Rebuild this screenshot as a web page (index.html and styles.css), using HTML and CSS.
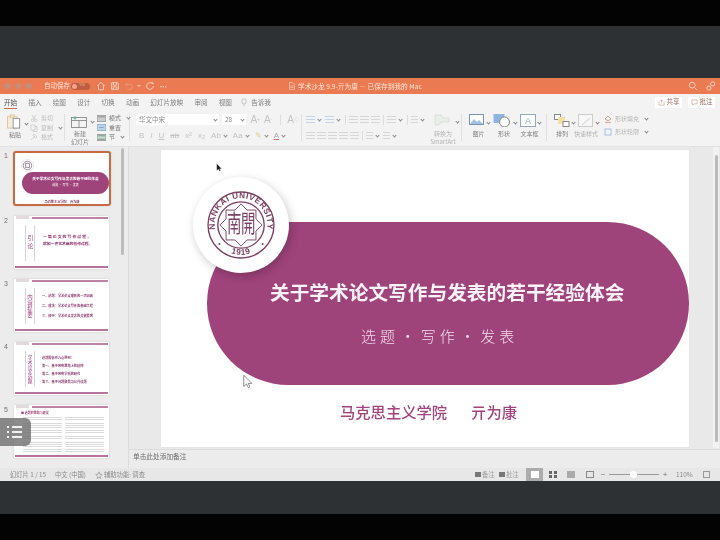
FILE: index.html
```html
<!DOCTYPE html>
<html lang="zh-CN">
<head>
<meta charset="utf-8">
<title>学术沙龙 9.9-亓为康</title>
<link rel="stylesheet" href="styles.css">
</head>
<body>
<div class="screen">
  <div class="band-black"></div>
  <div class="band-dark tall"></div>
  <header class="titlebar">
    <div class="lights"><i></i><i></i><i></i></div>
    <span class="autosave">自动保存</span>
    <span class="toggle"><b></b><em>关闭</em></span>
    <svg class="tb-icon" viewBox="0 0 12 12"><path d="M1.500 6 6 1.500 10.500 6M3 5v5.500h6V5"/></svg>
    <svg class="tb-icon" viewBox="0 0 12 12"><path d="M2 2h7l1 1v7H2zM4 2v3h4V2M4 10V7h4v3"/></svg>
    <svg class="tb-icon dim" viewBox="0 0 12 12"><path d="M2 4h5a3 3 0 0 1 0 6H4M2 4l2-2M2 4l2 2"/></svg>
    <span class="tb-caret"></span>
    <svg class="tb-icon" viewBox="0 0 12 12"><path d="M10 6a4 4 0 1 1-1.500-3.100M8.500 1v2h2"/></svg>
    <span class="tb-more">···</span>
    <div class="doc-title">
      <svg class="doc-icon" viewBox="0 0 8 10"><path d="M.5.500h4.500l2.500 2.500v6.500h-7zM2 5h4M2 7h4"/></svg>
      <span>学术沙龙 9.9-亓为康 — 已保存到我的 Mac</span>
    </div>
    <svg class="tb-icon right" viewBox="0 0 12 12"><circle cx="5" cy="5" r="3.500"/><path d="m8 8 3 3"/></svg>
    <svg class="tb-icon" viewBox="0 0 12 12"><circle cx="8" cy="3.500" r="2.500"/><circle cx="3.500" cy="8.500" r="2.500"/></svg>
  </header>

  <nav class="tabs">
    <span class="tab active">开始</span>
    <span class="tab">插入</span>
    <span class="tab">绘图</span>
    <span class="tab">设计</span>
    <span class="tab">切换</span>
    <span class="tab">动画</span>
    <span class="tab">幻灯片放映</span>
    <span class="tab">审阅</span>
    <span class="tab">视图</span>
    <span class="tab tell">
      <svg class="bulb" viewBox="0 0 8 10"><path d="M2.500 7.500C2 6 1 5.500 1 3.800a3 3 0 0 1 6 0C7 5.500 6 6 5.500 7.500zM3 9.300h2"/></svg>
      告诉我
    </span>
    <div class="tab-actions">
      <span class="pill-btn">
        <svg viewBox="0 0 8 8"><path d="M1 3v4h6V3M4 5V1M2.500 2.500 4 1l1.500 1.500"/></svg>共享
      </span>
      <span class="pill-btn">
        <svg viewBox="0 0 8 8"><path d="M1 1h6v4.500H3.500L2 7V5.500H1z"/></svg>批注
      </span>
    </div>
  </nav>

  <section class="ribbon">
    <div class="group paste-group">
      <div class="big-tool">
        <svg class="i-paste" viewBox="0 0 18 16"><path class="o" d="M1 2.500h10V15H1z"/><rect class="o" x="4" y="1" width="4" height="2.500"/><rect class="w" x="7" y="5" width="7" height="10"/></svg>
        <span class="lbl">粘贴</span>
      </div>
      <span class="caret paste-caret"></span>
      <div class="mini-col">
        <span class="mini"><svg class="mi" viewBox="0 0 8 8"><path d="M2 1l3 4M6 1 3 5"/><circle cx="2.500" cy="6.300" r="1.200"/><circle cx="5.500" cy="6.300" r="1.200"/></svg><span>剪切</span></span>
        <span class="mini"><svg class="mi" viewBox="0 0 8 8"><path d="M1 1h4v5H1zM3 6v1.500h4v-5H5"/></svg><span>复制</span><i class="caret"></i></span>
        <span class="mini"><svg class="mi" viewBox="0 0 8 8"><path d="M1 7 5 3M4 1l3 3-1.500 1L3 2.500z"/></svg><span>格式</span></span>
      </div>
    </div>
    <div class="group slide-group">
      <div class="big-tool new-slide">
        <svg class="i-new" viewBox="0 0 16 12"><rect x=".5" y="1.500" width="15" height="10"/><path d="M.5 4.500h15M8 4.500v7"/><path class="g" d="M4 0v4M2 2h4"/></svg>
        <span class="lbl two">新建<br>幻灯片</span>
      </div>
      <span class="caret new-caret"></span>
      <div class="mini-col wide">
        <span class="mini"><svg class="sq" viewBox="0 0 8 6"><rect width="8" height="6"/><path d="M1 1.500h6"/></svg><span>模式</span><i class="caret"></i></span>
        <span class="mini"><svg class="sq blue" viewBox="0 0 8 6"><rect width="8" height="6"/><path d="M2 3h4"/></svg><span>重置</span></span>
        <span class="mini"><svg class="sq green" viewBox="0 0 8 6"><rect width="8" height="6"/><path d="M1 1.500h6M1 4.500h6"/></svg><span>节</span><i class="caret"></i></span>
      </div>
    </div>
    <div class="group font-group">
      <div class="font-row">
        <span class="select font-name">华文中宋<i class="caret"></i></span>
        <span class="select font-size">28<i class="caret"></i></span>
        <span class="glyph lg">A<sup>+</sup></span>
        <span class="glyph lg">A<sup>-</sup></span>
        <span class="vsep"></span>
        <span class="glyph lg">A<sub>◇</sub></span>
      </div>
      <div class="font-row fmt">
        <span class="glyph">B</span>
        <span class="glyph it">I</span>
        <span class="glyph un">U</span>
        <span class="glyph st">ab</span>
        <span class="glyph">x²</span>
        <span class="glyph">x₂</span>
        <span class="glyph">Ab<i class="caret"></i></span>
        <span class="glyph">Aa<i class="caret"></i></span>
        <span class="glyph hl">✎<i class="caret"></i></span>
        <span class="glyph red"><u>A</u><i class="caret"></i></span>
      </div>
    </div>
    <div class="group para-group">
      <div class="para-rows">
        <div class="para-row">
          <span class="lines bul"></span><i class="caret"></i>
          <span class="lines bul"></span><i class="caret"></i>
          <span class="vsep"></span>
          <span class="lines"></span><span class="lines"></span><span class="lines"></span>
          <span class="vsep"></span>
          <span class="lines"></span><i class="caret"></i>
          <span class="vsep"></span>
          <span class="lines short"></span><i class="caret"></i>
        </div>
        <div class="para-row">
          <span class="lines"></span><span class="lines"></span><span class="lines"></span><span class="lines"></span><span class="lines"></span>
          <span class="vsep"></span>
          <span class="lines short"></span><i class="caret"></i>
          <span class="lines short"></span><i class="caret"></i>
        </div>
      </div>
      <div class="big-tool art-tool">
        <svg class="i-art" viewBox="0 0 18 12"><path d="M1 1h6l2 3 6 0v4H7L5 11H1z"/></svg>
        <span class="lbl two dim">转换为<br>SmartArt</span>
      </div>
      <i class="caret art-caret"></i>
    </div>
    <div class="group insert-group">
      <div class="big-tool">
        <svg class="i-ins" viewBox="0 0 16 13"><rect x=".5" y=".5" width="14" height="10" fill="#fff" stroke="#7d93ad"/><path d="M1 10l4-5 3 3 2-2 4 4z" fill="#9cc2e4"/></svg>
        <span class="lbl">图片</span>
      </div><i class="caret"></i>
      <div class="big-tool">
        <svg class="i-ins" viewBox="0 0 18 13"><rect x="0" y="0" width="11" height="9" fill="#8fb4e0"/><circle cx="11" cy="8" r="5" fill="#fff" stroke="#888"/></svg>
        <span class="lbl">形状</span>
      </div><i class="caret"></i>
      <div class="big-tool">
        <svg class="i-ins" viewBox="0 0 16 13"><rect x=".5" y=".5" width="15" height="12" fill="#fff" stroke="#8fa7c4"/><text x="8" y="10" class="a">A</text></svg>
        <span class="lbl">文本框</span>
      </div><i class="caret"></i>
    </div>
    <div class="group draw-group">
      <div class="big-tool">
        <svg class="i-ins" viewBox="0 0 16 13"><rect x=".5" y=".5" width="6" height="5" fill="#fff" stroke="#888"/><rect x="4" y="3" width="7" height="7" fill="#f6dfa6"/><rect x="9" y="7.500" width="6" height="5" fill="#fff" stroke="#888"/></svg>
        <span class="lbl">排列</span>
      </div><i class="caret"></i>
      <div class="big-tool">
        <svg class="i-ins" viewBox="0 0 16 13"><rect x=".5" y=".5" width="14" height="12" fill="#f7f7f7" stroke="#ccc"/><path d="M4 11 12 4" stroke="#ccc" fill="none"/></svg>
        <span class="lbl dim">快速样式</span>
      </div><i class="caret"></i>
      <div class="mini-col shape-col">
        <span class="mini"><svg class="sq2" viewBox="0 0 8 8"><path d="M4 1 7 4 4 6 1 4zM1 7.500h6" fill="none" stroke="#e2a08c"/></svg><span>形状填充</span><i class="caret"></i></span>
        <span class="mini"><svg class="sq2" viewBox="0 0 8 8"><rect x="1" y="1" width="6" height="6" fill="none" stroke="#a9c0d8"/></svg><span>形状轮廓</span><i class="caret"></i></span>
      </div>
    </div>
  </section>

  <main class="work">
    <aside class="sidebar">
      <div class="thumbs">
        <div class="thumb-row first">
          <span class="num">1</span>
          <div class="thumb selected">
            <div class="t-pill">
              <span class="t-title">关于学术论文写作与发表的若干经验体会</span>
              <span class="t-sub">选题 · 写作 · 发表</span>
            </div>
            <svg class="t-seal" viewBox="0 0 20 20"><circle cx="10" cy="10" r="9.500" fill="#fff" stroke="#ddd"/><circle cx="10" cy="10" r="6.500" fill="none" stroke="#7a4a6a"/><path d="M7 7h6v6H7z" fill="none" stroke="#7a4a6a"/></svg>
            <span class="t-foot">马克思主义学院　亓为康</span>
          </div>
        </div>
        <div class="thumb-row">
          <span class="num">2</span>
          <div class="thumb plain">
            <span class="t-head"></span>
            <span class="t-vert two">引论</span>
            <div class="t-lines big">
              <span class="wide-line">一篇论文的写作过程，</span>
              <span>就如一件艺术品的创作过程。</span>
            </div>
            <span class="t-rule"></span>
          </div>
        </div>
        <div class="thumb-row">
          <span class="num">3</span>
          <div class="thumb plain">
            <span class="t-head"></span>
            <span class="t-vert">内容提要</span>
            <div class="t-lines">
              <span>一、选题：学术论文成败的一大因素</span>
              <span>二、成法：学术论文写作的基础工程</span>
              <span>三、修行：学术论文发表的关键要求</span>
            </div>
            <span class="t-rule"></span>
          </div>
        </div>
        <div class="thumb-row">
          <span class="num">4</span>
          <div class="thumb plain">
            <span class="t-head"></span>
            <span class="t-vert six">学术论文选题</span>
            <div class="t-lines tight">
              <span>选题需依托九点原则：</span>
              <span>第一、基于既有思路上的延伸</span>
              <span>第二、基于既有学科的研究</span>
              <span>第三、基于问题聚焦与公共议题</span>
            </div>
            <span class="t-rule"></span>
          </div>
        </div>
        <div class="thumb-row">
          <span class="num">5</span>
          <div class="thumb plain">
            <span class="t-head"></span>
            <span class="t-h5">■ 选题的思路与建议</span>
            <div class="t-table">
              <i></i><i></i><i></i><i></i><i></i><i></i><i></i><i></i><i></i><i></i><i></i><i></i>
            </div>
            <span class="t-rule"></span>
          </div>
        </div>
      </div>
      <div class="side-scroll"><span></span></div>
    </aside>

    <div class="editor">
      <div class="stage">
        <article class="slide">
          <div class="pill">
            <h1>关于学术论文写作与发表的若干经验体会</h1>
            <p class="subtitle">选题 · 写作 · 发表</p>
          </div>
          <div class="seal-disc">
            <svg class="seal" viewBox="0 0 66 66">
              <defs>
                <path id="arcTop" d="M8.500 39.500A25.500 25.500 0 1 1 57.500 39.500"/>
                <path id="arcBot" d="M9.240 49.600A29 29 0 0 0 56.760 49.600"/>
              </defs>
              <circle class="ring" cx="33" cy="33" r="32"/>
              <circle class="ring" cx="33" cy="33" r="22.500"/>
              <text class="seal-text"><textPath href="#arcTop" startOffset="50%" text-anchor="middle">NANKAI UNIVERSITY</textPath></text>
              <text class="seal-text"><textPath href="#arcBot" startOffset="50%" text-anchor="middle">1919</textPath></text>
              <circle class="dot" cx="12" cy="51.500" r="1"/>
              <circle class="dot" cx="54" cy="51.500" r="1"/>
              <path class="ring thin" d="M33 12.500 38.800 18.500 47.500 18.500 47.500 27.200 53.500 33 47.500 38.800 47.500 47.500 38.800 47.500 33 53.500 27.200 47.500 18.500 47.500 18.500 38.800 12.500 33 18.500 27.200 18.500 18.500 27.200 18.500Z"/>
              <text class="seal-cn" transform="translate(33 40) scale(1 1.650)">南開</text>
            </svg>
          </div>
          <p class="byline"><span>马克思主义学院</span><span>亓为康</span></p>
        </article>
        <div class="main-scroll"><span></span></div>
      </div>
      <div class="notes">单击此处添加备注</div>
    </div>
  </main>

  <footer class="status">
    <span class="st-a">幻灯片 1 / 15</span>
    <span class="st-b">中文 (中国)</span>
    <svg class="st-icon" viewBox="0 0 9 9"><path d="M4.500 1 5.500 3.500 8 4 6 6 6.500 8.500 4.500 7 2.500 8.500 3 6 1 4 3.500 3.500Z"/></svg>
    <span class="st-c">辅助功能: 调查</span>
    <div class="st-right">
      <span class="st-note"><i></i>备注</span>
      <span class="st-note"><i></i>批注</span>
      <span class="view on"><i></i></span>
      <span class="view grid"><i></i><i></i><i></i><i></i></span>
      <span class="view book"></span>
      <span class="view show"></span>
      <span class="zoom-sign">−</span>
      <span class="slider"><b></b></span>
      <span class="zoom-sign plus">+</span>
      <span class="zoom-val">110%</span>
      <span class="fit"></span>
    </div>
  </footer>
  <div class="band-dark"></div>
  <div class="band-black"></div>

  <div class="float-menu"><span></span><span></span><span></span></div>
  <svg class="cursor black" viewBox="0 0 8 12"><path d="M1 1v9l2.200-2 1.500 3 1.300-.7-1.500-2.800H7.500Z"/></svg>
  <svg class="cursor ghost" viewBox="0 0 8 12"><path d="M1 1v9l2.200-2 1.500 3 1.300-.7-1.500-2.800H7.500Z"/></svg>
</div>
</body>
</html>
```

FILE: styles.css
```css
* { box-sizing: border-box; }
html, body { margin: 0; height: 100%; }
body { background: #030303; overflow: hidden; }
:root { --cjk: "Noto Sans CJK SC", "Liberation Sans", sans-serif; --plum: #9f437b; }
.screen {
  position: relative; width: 720px; height: 540px; display: flex; flex-direction: column;
  font: 6.500px/1.2 var(--cjk); color: #8a8a8a; background: #030303; filter: blur(.35px);
}
.band-black { height: 26px; background: #030303; flex: none; }
.band-dark { height: 33px; background: #2d3134; flex: none; }
.band-dark.tall { height: 52px; }

/* title bar */
.titlebar {
  height: 16px; flex: none; background: #e97a52; display: flex; align-items: center;
  padding-left: 4px; color: #fbe3d8; position: relative;
}
.lights { display: flex; gap: 4px; width: 40px; }
.lights i { width: 6.500px; height: 6.500px; border-radius: 50%; background: #c78d79; }
.autosave { font-size: 6.500px; width: 27px; }
.toggle { width: 19px; height: 7px; border-radius: 4px; background: #bd5e3e; display: flex; align-items: center; margin-right: 6px; padding-left: 1px; }
.toggle b { width: 5px; height: 5px; border-radius: 50%; background: #f0a48c; }
.toggle em { font-size: 3px; font-style: normal; margin-left: 2px; color: #e6a78f; }
.tb-icon { width: 10px; height: 10px; margin-right: 4px; fill: none; stroke: #f9dccf; stroke-width: 1; flex: none; }
.tb-icon.dim { stroke: #ec9a7c; margin-right: 2px; }
.tb-caret { width: 0; height: 0; border: 2px solid transparent; border-top: 2.500px solid #f3c3ae; margin: 2px 4px 0 1px; }
.tb-more { font: 700 7px "Liberation Sans", sans-serif; margin-left: 1px; }
.doc-title { position: absolute; left: 289px; top: 0; height: 16px; display: flex; align-items: center; gap: 3px; font-size: 6.700px; color: #fbe3d8; }
.doc-icon { width: 6px; height: 8px; fill: none; stroke: #fbe3d8; stroke-width: .8; }
.tb-icon.right { margin-left: auto; margin-right: 8px; }
.titlebar .tb-icon:last-child { margin-right: 4px; }

/* tabs */
.tabs { height: 16px; flex: none; background: #f3f3f3; display: flex; align-items: center; padding-left: 4px; gap: 11.200px; font-size: 6.600px; color: #7c7c7c; }
.tab { position: relative; line-height: 16px; white-space: nowrap; }
.tab.active { color: #555; }
.tab.active::after { content: ""; position: absolute; left: 0; right: 0; bottom: 1px; height: 1px; background: #c76f4d; }
.tab.tell { display: flex; align-items: center; gap: 4px; margin-left: -2px; }
.bulb { width: 6px; height: 8px; fill: none; stroke: #999; stroke-width: .7; }
.tab-actions { margin-left: auto; display: flex; gap: 6px; padding-right: 5px; }
.pill-btn { width: 27px; height: 11px; background: #fff; display: flex; align-items: center; justify-content: center; gap: 2px; font-size: 6.500px; color: #9a6a58; }
.pill-btn svg { width: 7px; height: 7px; fill: none; stroke: #b58a78; stroke-width: .6; }

/* ribbon */
.ribbon { height: 37px; flex: none; background: #f3f3f3; border-bottom: 1px solid #e2e2e2; display: flex; align-items: stretch; padding: 4px 0 5px; color: #b4b4b4; }
.group { display: flex; flex: none; border-right: 1px solid #e0e0e0; position: relative; }
.caret { display: inline-block; width: 3px; height: 3px; border-right: 1px solid #888; border-bottom: 1px solid #888; transform: rotate(45deg); margin: 0 2px 1px 3px; flex: none; }
.big-tool { display: flex; flex-direction: column; align-items: center; gap: 4px; }
.lbl { font-size: 6px; color: #808080; text-align: center; line-height: 7px; white-space: nowrap; }
.lbl.dim { color: #b2b2b2; }
.lbl.two { line-height: 7.500px; }
.mini-col { display: flex; flex-direction: column; justify-content: space-between; padding: 0; }
.mini { display: flex; align-items: center; gap: 3px; font-size: 6px; color: #bbb; line-height: 8px; white-space: nowrap; }
.mi { width: 8px; height: 8px; fill: none; stroke: #c4c4c4; stroke-width: .7; }

.paste-group { width: 65px; padding-left: 6px; }
.paste-group .big-tool { width: 18px; gap: 2px; }
.i-paste { width: 18px; height: 15px; flex: none; }
.i-paste .o { fill: #f4ecdd; stroke: #d9b889; stroke-width: .8; }
.i-paste .w { fill: #fff; stroke: #777; stroke-width: .8; }
.paste-caret { margin: 8px 2px 0 1px; height: 3px; }

.slide-group { width: 65px; padding-left: 6px; }
.new-slide { width: 20px; gap: 2px; }
.i-new { width: 16px; height: 12px; fill: none; stroke: #7d7d7d; stroke-width: .8; flex: none; align-self: flex-start; margin-top: 2px; }
.i-new .g { stroke: #5fae92; }
.new-caret { margin: 6px 3px 0 2px; }
.wide .mini { color: #757575; }
.sq { width: 9px; height: 7px; fill: #ccc; stroke: #777; stroke-width: .6; }
.sq.blue { fill: #bcd4ea; stroke: #6f8fb0; }
.sq.green { fill: #c4e0d2; stroke: #666; }

.font-group { width: 172px; padding-left: 6px; display: flex; flex-direction: column; justify-content: space-between; }
.font-row { display: flex; align-items: center; height: 11px; gap: 2px; }
.select { background: #fff; height: 11px; font-size: 6.500px; color: #8c8c8c; display: flex; align-items: center; padding-left: 3px; justify-content: space-between; }
.font-name { width: 85px; margin-right: 1px; }
.font-size { width: 25px; margin-right: 2px; }
.glyph { font: 8px "Liberation Sans", sans-serif; color: #c3c3c3; display: inline-flex; align-items: center; margin-right: 5px; }
.glyph.lg { font-size: 10px; margin-right: 2px; }
.glyph sup, .glyph sub { font-size: 5px; line-height: 1; }
.vsep { width: 1px; height: 10px; background: #ddd; margin: 0 4px; flex: none; }
.font-row.fmt { padding-left: 3px; gap: 0; }
.fmt .glyph { width: auto; margin-right: 6px; }
.fmt .caret { margin: 0 0 1px 3px; }
.glyph.it { font-style: italic; }
.glyph.un { text-decoration: underline; }
.glyph.st { text-decoration: line-through; }
.glyph.hl { color: #e3cf8c; }
.glyph.red { color: #a8a8a8; }
.glyph.red u { text-decoration: underline 1px #d96a6a; }

.para-group { width: 160px; padding-left: 4px; }
.para-rows { width: 124px; display: flex; flex-direction: column; justify-content: space-between; }
.para-row { display: flex; align-items: center; height: 11px; gap: 2px; overflow: hidden; }
.para-row .caret { margin: 0 2px 1px 1px; }
.lines { width: 9px; height: 7px; flex: none; background: repeating-linear-gradient(#d6d6d6 0 1px, transparent 1px 3px); }
.lines.short { width: 7px; }
.lines.bul { background: repeating-linear-gradient(#c6d3e3 0 1px, transparent 1px 3px); }
.para-row .vsep { margin: 0 1px; }

.art-tool { width: 26px; gap: 4px; }
.i-art { width: 18px; height: 12px; fill: #e8efe9; stroke: #cfd8d2; stroke-width: .7; flex: none; }
.art-caret { margin: 6px 0 0 0; }

.insert-group { width: 85px; padding-left: 7px; }
.insert-group .caret, .draw-group > .caret { margin: 7px 3px 0 2px; }
.insert-group .big-tool, .draw-group .big-tool { width: 16px; gap: 3px; }
.insert-group .big-tool:nth-of-type(2) { width: 19px; }
.insert-group .big-tool:nth-of-type(3) { width: 16px; }
.insert-group .lbl { margin-left: 3px; }
.i-ins { width: 100%; height: 13px; flex: none; }
.i-ins .a { font: 9px "Liberation Sans", sans-serif; fill: #8fb0d4; text-anchor: middle; }
.draw-group { flex: 1; padding-left: 7px; border-right: 0; }
.shape-col { padding: 1px 0 0 2px; gap: 5px; justify-content: flex-start; }
.shape-col .mini { font-size: 6px; color: #b6b6b6; }
.sq2 { width: 8px; height: 8px; }

/* workspace */
.work { flex: 1; min-height: 0; display: flex; background: #e9e9e9; }
.sidebar { width: 129px; flex: none; border-right: 1px solid #dcdcdc; display: flex; position: relative; overflow: hidden; background: #ececec; }
.thumbs { flex: 1; display: flex; flex-direction: column; padding-top: 4px; }
.thumb-row { display: flex; padding-left: 4px; height: 63px; padding-top: 6px; flex: none; }
.thumb-row.first { height: 59px; padding-top: 0; }
.num { font: 7px "Liberation Sans", sans-serif; width: 10px; color: #6f6f6f; margin-top: 1px; }
.thumb { position: relative; width: 95px; height: 53px; background: #fff; box-shadow: 0 0 2px rgba(0,0,0,.15); color: var(--plum); overflow: hidden; flex: none; border-radius: 1px; }
.thumb.selected { width: 98px; height: 55px; margin-left: -1px; border: 2px solid #c86a42; border-radius: 3px; }
.t-seal { position: absolute; left: 6px; top: 6px; width: 13px; height: 13px; }
.t-pill { position: absolute; left: 7px; right: 0; top: 19px; height: 22px; border-radius: 11px; background: var(--plum); color: #fff; display: flex; flex-direction: column; align-items: center; gap: 2px; padding-top: 4px; }
.t-title { font-size: 3.700px; font-weight: 700; white-space: nowrap; line-height: 5px; }
.t-sub { font-size: 3px; line-height: 4px; }
.t-foot { position: absolute; left: 0; right: 0; bottom: 0; text-align: center; font-size: 3.200px; font-weight: 700; color: #7f3a64; line-height: 5px; }
.t-head { position: absolute; left: 18px; right: 1px; top: 1px; height: 2px; background: #bd82a6; }
.t-head::before { content: ""; position: absolute; left: -16px; top: -1px; width: 13px; height: 3px; background: #e2dade; }
.t-rule { position: absolute; left: 1px; right: 1px; bottom: 1px; height: 2px; background: #b8739c; }
.t-vert { position: absolute; left: 11px; top: 9px; bottom: 8px; width: 10px; writing-mode: vertical-rl; font-size: 5.500px; letter-spacing: .5px; color: #a3417c; border-left: 1px solid #d5d5d5; border-right: 1px solid #d5d5d5; text-align: center; line-height: 8px; }
.t-vert.six { font-size: 4.700px; letter-spacing: 0; }
.t-vert.two { font-size: 6px; letter-spacing: 2px; }
.t-lines { position: absolute; left: 28px; top: 11.500px; display: flex; flex-direction: column; gap: 5px; font-size: 3.200px; font-weight: 700; color: #8a3a6d; white-space: nowrap; line-height: 5px; padding-top: 2px; }
.t-lines.big { font-size: 3.800px; left: 29px; top: 16px; gap: 2px; color: #93306d; }
.t-lines .wide-line { letter-spacing: 1.100px; }
.t-lines.tight { top: 10.500px; gap: 3.100px; }
.t-h5 { position: absolute; left: 7px; top: 5.500px; font-size: 3px; font-weight: 700; color: #a3417c; line-height: 5px; white-space: nowrap; }
.t-table { position: absolute; left: 9px; right: 5px; top: 12px; bottom: 5px; display: grid; grid-template-columns: 1fr 1fr; column-gap: 3px; row-gap: 2px; }
.t-table i { background: repeating-linear-gradient(#dadada 0 1px, transparent 1px 2px); }
.side-scroll { position: absolute; right: 3px; top: 0; width: 4px; height: 100%; }
.side-scroll span { display: block; width: 3px; height: 107px; margin-top: 1px; background: #bdbdbd; border-radius: 2px; }

.editor { flex: 1; min-width: 0; display: flex; flex-direction: column; }
.stage { flex: 1; min-height: 0; padding: 3px 0 0 32px; display: flex; align-items: flex-start; position: relative; }
.slide { position: relative; width: 528px; height: 297px; background: #fff; flex: none; box-shadow: 0 0 1px rgba(0,0,0,.08); }
.pill { position: absolute; left: 46px; top: 72px; width: 482px; height: 163px; border-radius: 82px; background: var(--plum); color: #fff; text-align: center; }
.pill h1 { margin: 0; position: absolute; left: 63px; top: 56px; font: 700 19.700px/28px var(--cjk); white-space: nowrap; color: #fbf3f8; }
.subtitle { margin: 0; position: absolute; left: 154px; top: 103px; font: 15px/22px var(--cjk); letter-spacing: 4px; word-spacing: -6px; white-space: nowrap; color: #f2dce9; font-weight: 300; }
.seal-disc { position: absolute; left: 32px; top: 27px; width: 96px; height: 96px; border-radius: 50%; background: #fff; box-shadow: 2px 3px 10px rgba(0,0,0,.22); display: flex; align-items: center; justify-content: center; }
.seal { width: 68px; height: 68px; overflow: visible; }
.ring { fill: none; stroke: #7a3f62; stroke-width: 1.300; }
.ring.thin { stroke-width: .9; }
.dot { fill: #7a3f62; }
.seal-text { font: 700 8px "Liberation Sans", sans-serif; fill: #7a3f62; letter-spacing: .5px; }
.seal-cn { font: 400 14px var(--cjk); fill: #7a3f62; text-anchor: middle; letter-spacing: -.5px; }
.byline { position: absolute; left: 179px; top: 250px; margin: 0; display: flex; gap: 24px; font: 500 15.300px/22px var(--cjk); color: #a2457f; white-space: nowrap; }
.main-scroll { position: absolute; right: 1px; top: 0; width: 6px; bottom: 1px; background: #f2f2f2; padding: 8px 1px 0 2px; }
.main-scroll span { display: block; width: 3px; height: 287px; background: #bbb; border-radius: 2px; }
.notes { height: 19px; flex: none; border-top: 1px solid #dcdcdc; padding: 2px 0 0 4px; font-size: 6.700px; color: #6f6f6f; background: #ececec; }

/* status */
.status { height: 13px; flex: none; background: #e7e7e7; display: flex; align-items: center; padding-left: 10px; font-size: 6.300px; color: #8a8a8a; position: relative; white-space: nowrap; }
.st-a { width: 45px; }
.st-b { width: 40px; }
.st-icon { width: 8px; height: 8px; fill: none; stroke: #888; stroke-width: .7; margin-right: 1px; }
.st-right { margin-left: auto; display: flex; align-items: center; height: 13px; }
.st-note { width: 24px; display: flex; align-items: center; gap: 1px; color: #a0a0a0; }
.st-note i { width: 6px; height: 5px; background: #777; }
.view { height: 7px; width: 8px; flex: none; }
.view.on { background: #acacac; width: 17px; height: 13px; margin: 0 6px 0 3px; display: flex; align-items: center; justify-content: center; }
.view.on i { width: 8px; height: 7px; background: #fff; }
.view.grid { display: grid; grid-template: 3px 3px / 3px 3px; gap: 1px 2px; margin-right: 10px; }
.view.grid i { background: #666; }
.view.book { background: #aaa; margin-right: 11px; }
.view.show { border: 1px solid #888; margin-right: 6px; }
.zoom-sign { font: 8px "Liberation Sans", sans-serif; color: #777; width: 6px; text-align: center; }
.zoom-sign.plus { margin: 0 8px 0 3px; }
.slider { width: 50px; height: 1px; background: #999; position: relative; margin-left: 3px; }
.slider b { position: absolute; left: 21px; top: -3px; width: 7px; height: 7px; border-radius: 50%; background: #fff; }
.zoom-val { width: 27px; font-size: 6.500px; }
.fit { width: 7px; height: 7px; border: 1px solid #999; margin-right: 10px; }

/* overlays */
.float-menu { position: absolute; left: 0; top: 418px; width: 31px; height: 28px; background: rgba(110,110,110,.8); border-radius: 0 6px 6px 0; display: flex; flex-direction: column; justify-content: center; align-items: flex-start; gap: 3px; padding-left: 7px; }
.float-menu span { width: 15px; height: 2px; background: linear-gradient(90deg, #f1f1f1 0 2px, transparent 2px 5px, #f1f1f1 5px); }
.cursor { position: absolute; width: 8px; height: 12px; }
.cursor.black { left: 216px; top: 163px; fill: #222; stroke: none; width: 6px; height: 9px; }
.cursor.ghost { left: 242px; top: 374px; width: 11px; height: 15px; fill: #fff; stroke: #666; stroke-width: .6; }
```
